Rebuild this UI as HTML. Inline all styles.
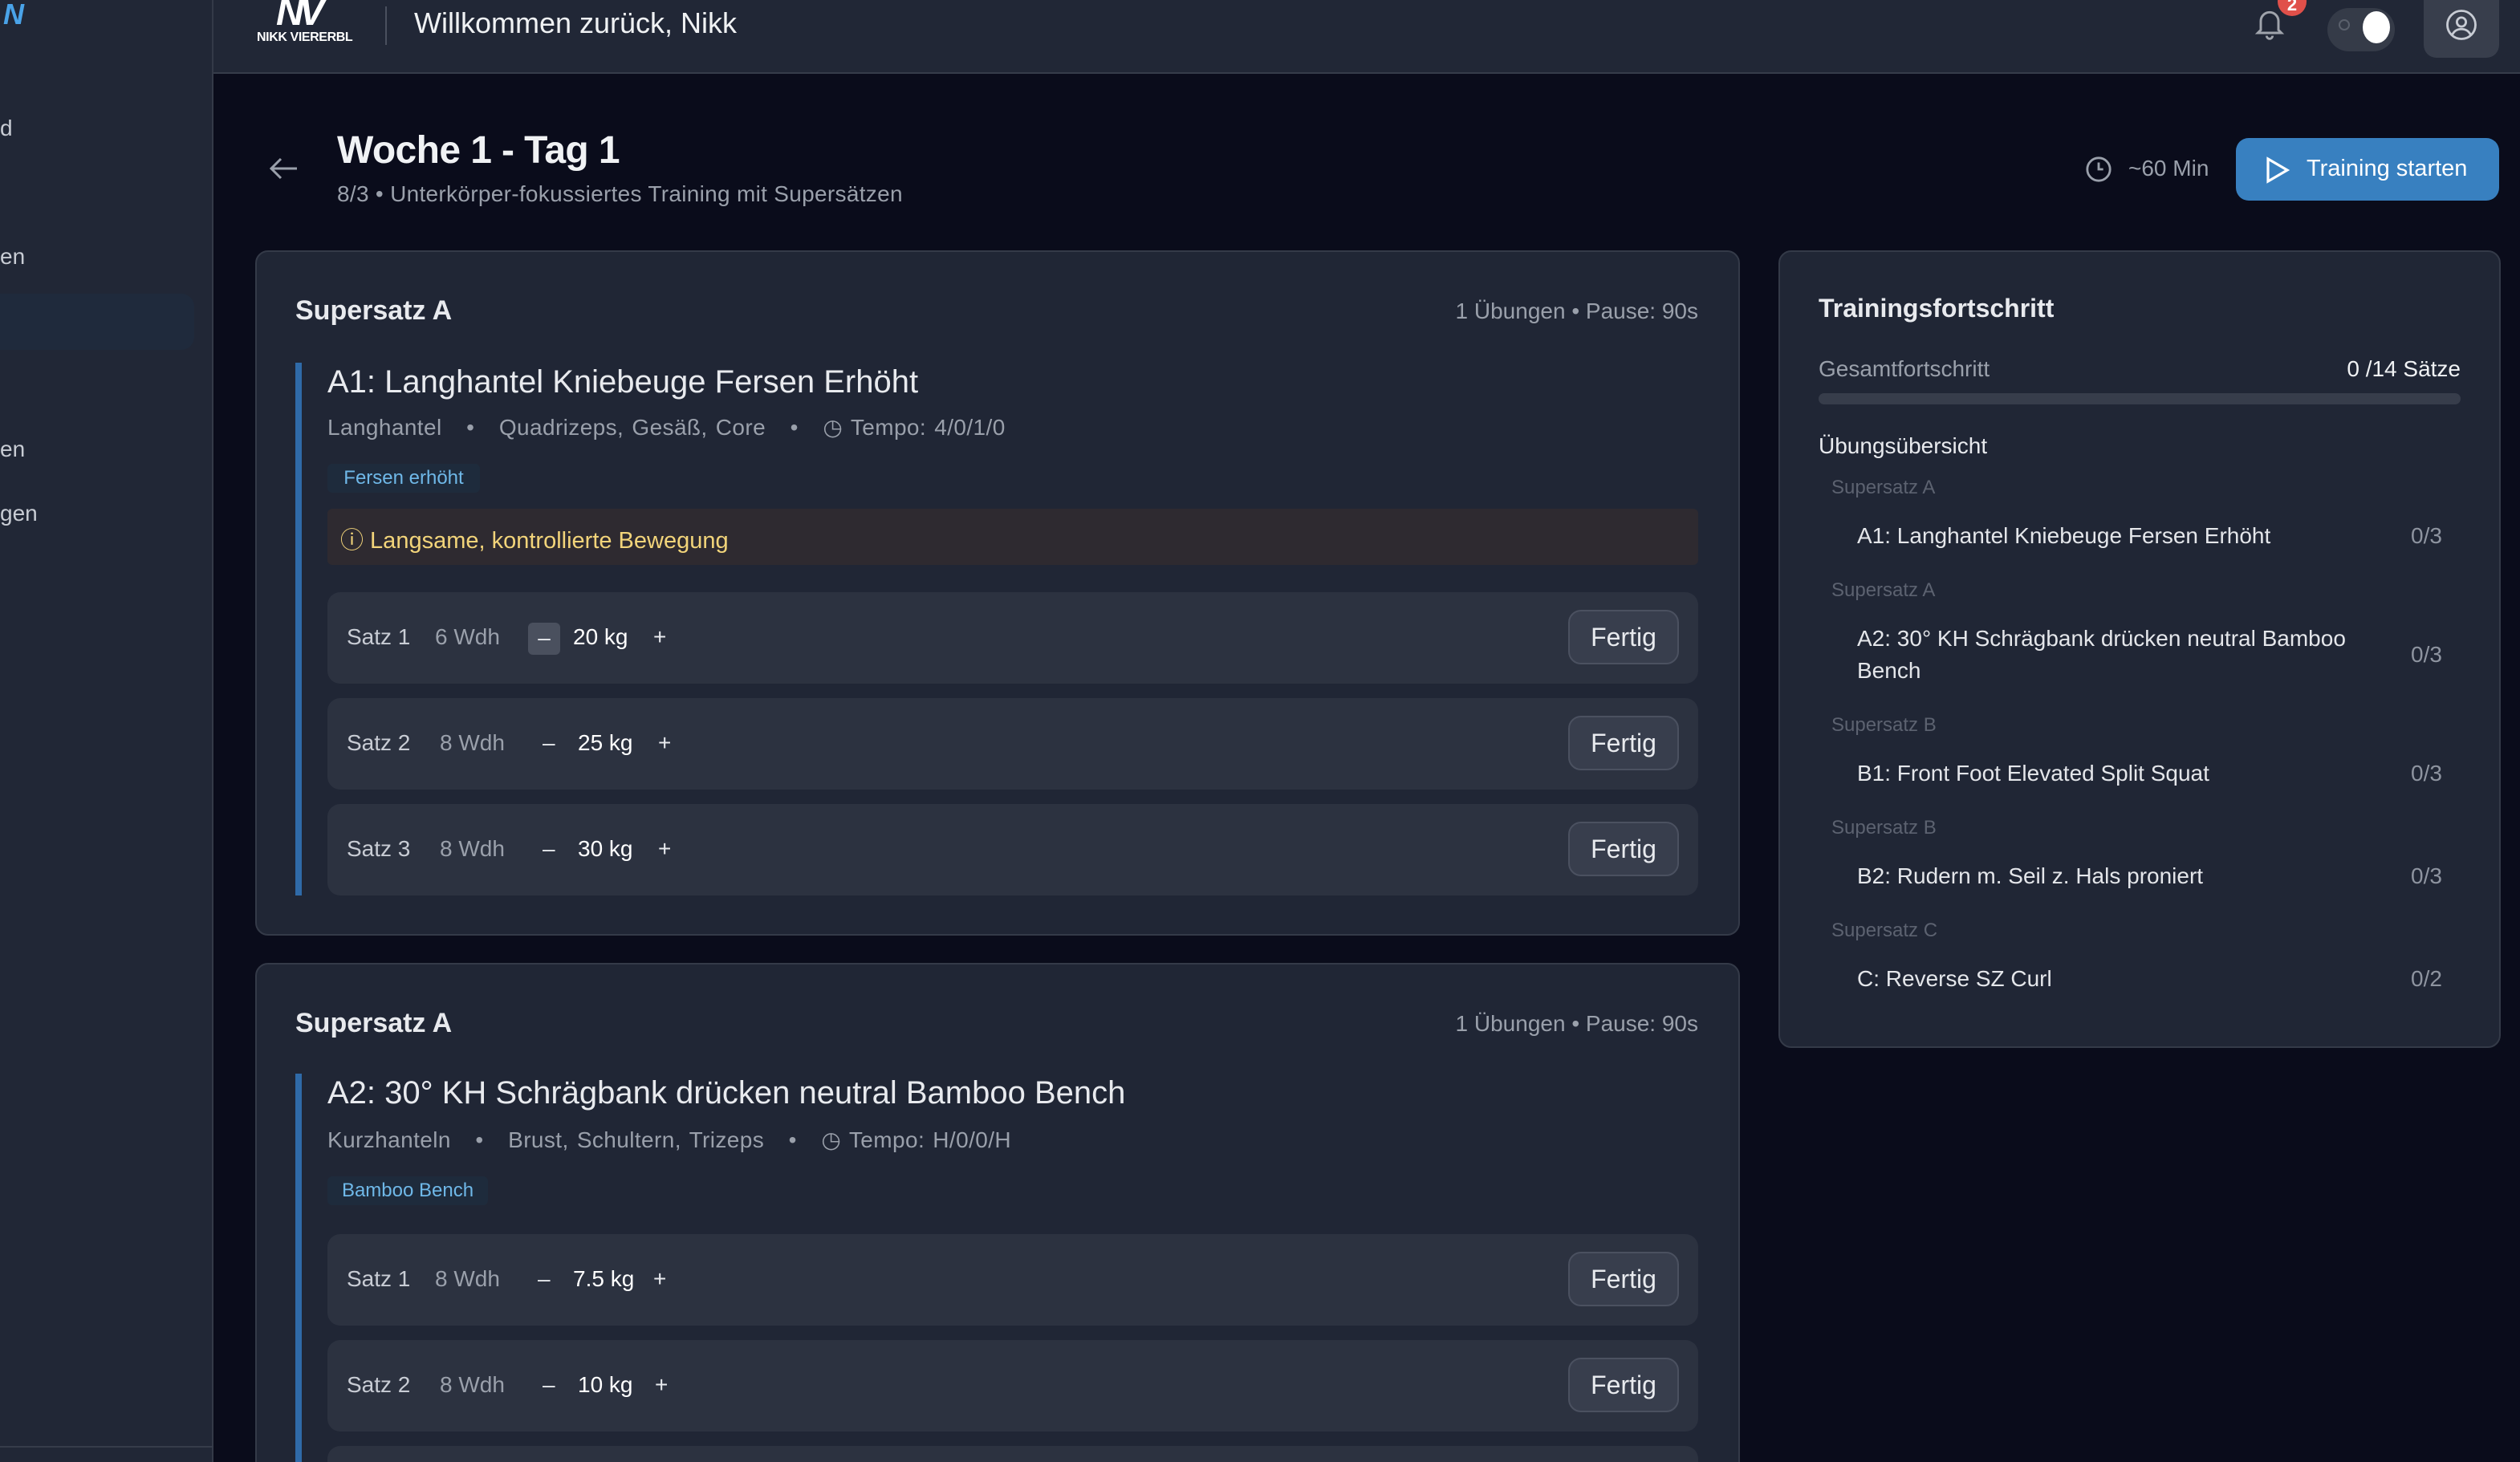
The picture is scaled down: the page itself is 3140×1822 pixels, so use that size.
<!DOCTYPE html>
<html><head><meta charset="utf-8"><style>
*{box-sizing:border-box;margin:0;padding:0}
html,body{width:3140px;height:1822px;overflow:hidden;background:#0a0c1b}
#r{zoom:2;width:1570px;height:911px;position:relative;font-family:"Liberation Sans",sans-serif;color:#e8eaee;background:#0a0c1b;overflow:hidden}
.a{position:absolute}
.sb{left:0;top:0;width:133px;height:911px;background:#212736;border-right:1px solid #343a48}
.hd{left:133px;top:0;width:1437px;height:46px;background:#212736;border-bottom:1px solid #363c4a}
.card{background:#202635;border:1px solid #343a48;border-radius:8px}
.row{position:absolute;left:203px;width:854px;height:57px;background:#2c3240;border-radius:8px;font-size:14px}
.row span{position:absolute;top:20px}
.fb{position:absolute;right:12px;top:11px;width:69px;height:34px;background:#383e4d;border:1px solid #4b5160;border-radius:8px;font-size:16px;color:#e8eaee;text-align:center;line-height:32px}
.g{color:#9aa0ab}
.lbl{position:absolute;left:1140px;font-size:12px;color:#5c6270}
.it{position:absolute;left:1156px;font-size:14px;color:#e4e6ea;width:330px;line-height:20px}
.ct{position:absolute;left:1502px;font-size:14px;color:#8e94a0}
</style></head><body><div id="r">
<div class="a sb"></div>
<div class="a" style="left:0;top:901px;width:133px;height:1px;background:#363c4a"></div>
<div class="a" style="left:2px;top:0;font-size:18px;font-weight:bold;color:#4aa3e8;font-style:italic;line-height:18px">N</div>
<div class="a" style="left:0;top:72px;font-size:14px;color:#c8ccd4">d</div>
<div class="a" style="left:0;top:152px;font-size:14px;color:#c8ccd4">en</div>
<div class="a" style="left:0;top:183px;width:121px;height:35px;background:#1f2a3c;border-radius:0 8px 8px 0"></div>
<div class="a" style="left:0;top:272px;font-size:14px;color:#c8ccd4">en</div>
<div class="a" style="left:0;top:312px;font-size:14px;color:#c8ccd4">gen</div>
<div class="a hd"></div>
<div class="a" style="left:172px;top:-6px;font-size:24px;font-weight:bold;font-style:italic;color:#fff;letter-spacing:-3px">NV</div>
<div class="a" style="left:160px;top:19px;font-size:8px;font-weight:bold;color:#fff;letter-spacing:-0.2px">NIKK VIERERBL</div>
<div class="a" style="left:240px;top:4px;width:1px;height:24px;background:#4a505e"></div>
<div class="a" style="left:258px;top:4px;font-size:18px;color:#f0f2f4">Willkommen zurück, Nikk</div>
<svg class="a" style="left:1403px;top:4px" width="22" height="22" viewBox="0 0 24 24" fill="none" stroke="#a0a4ac" stroke-width="1.6"><path d="M6 16V10a6 6 0 0 1 12 0v6l2 2H4z"/><path d="M10 20a2 2 0 0 0 4 0"/></svg>
<div class="a" style="left:1419px;top:-8px;width:18px;height:18px;border-radius:9px;background:#e0504a;color:#fff;font-size:11px;text-align:center;line-height:22px;font-weight:bold">2</div>
<div class="a" style="left:1450px;top:5px;width:42px;height:27px;border-radius:14px;background:#353b48"></div>
<div class="a" style="left:1472px;top:7px;width:17px;height:20px;border-radius:50%;background:#fff"></div>
<div class="a" style="left:1457px;top:12px;width:7px;height:7px;border-radius:50%;border:1px solid #5a606c"></div>
<div class="a" style="left:1510px;top:0;width:47px;height:36px;background:#383e4c;border-radius:0 0 8px 8px"></div>
<svg class="a" style="left:1523px;top:5px" width="21" height="21" viewBox="0 0 24 24" fill="none" stroke="#c8ccd4" stroke-width="1.6"><circle cx="12" cy="12" r="10"/><circle cx="12" cy="10" r="3.2"/><path d="M5.5 19c1.5-3 4-4 6.5-4s5 1 6.5 4"/></svg>

<svg class="a" style="left:167px;top:97px" width="20" height="16" viewBox="0 0 20 16" fill="none" stroke="#9aa0ab" stroke-width="1.5"><path d="M18 8H2M8 2L2 8l6 6"/></svg>
<div class="a" style="left:210px;top:80px;font-size:24px;font-weight:bold;color:#f0f2f4;letter-spacing:-0.3px">Woche 1 - Tag 1</div>
<div class="a g" style="left:210px;top:113px;font-size:14px;letter-spacing:0.15px">8/3 • Unterkörper-fokussiertes Training mit Supersätzen</div>
<svg class="a" style="left:1299px;top:97px" width="17" height="17" viewBox="0 0 24 24" fill="none" stroke="#9aa0ab" stroke-width="2"><circle cx="12" cy="12" r="10"/><path d="M12 6v6h4"/></svg>
<div class="a g" style="left:1326px;top:97px;font-size:14px">~60 Min</div>
<div class="a" style="left:1393px;top:86px;width:164px;height:39px;background:#3880c0;border-radius:8px"></div>
<svg class="a" style="left:1411px;top:97px" width="16" height="18" viewBox="0 0 16 18" fill="none" stroke="#fff" stroke-width="1.6"><path d="M2 2l12 7-12 7z"/></svg>
<div class="a" style="left:1437px;top:97px;font-size:14.5px;color:#fff">Training starten</div>

<!-- card 1 -->
<div class="a card" style="left:159px;top:156px;width:925px;height:427px"></div>
<div class="a" style="left:184px;top:184px;font-size:17px;font-weight:bold">Supersatz A</div>
<div class="a g" style="left:851px;top:186px;width:207px;text-align:right;font-size:14px">1 Übungen • Pause: 90s</div>
<div class="a" style="left:184px;top:226px;width:4px;height:332px;background:#2f6aa8"></div>
<div class="a" style="left:204px;top:227px;font-size:20px">A1: Langhantel Kniebeuge Fersen Erhöht</div>
<div class="a g" style="left:204px;top:258px;font-size:14px;word-spacing:1px;letter-spacing:0.2px">Langhantel &nbsp;&nbsp;•&nbsp;&nbsp; Quadrizeps, Gesäß, Core &nbsp;&nbsp;•&nbsp;&nbsp; ◷ Tempo: 4/0/1/0</div>
<div class="a" style="left:204px;top:289px;width:95px;height:18px;background:#1e2b3c;border-radius:3px;color:#6fb8e8;font-size:12px;line-height:18px;text-align:center">Fersen erhöht</div>
<div class="a" style="left:204px;top:317px;width:854px;height:35px;background:#2e2a30;border-radius:3px"></div>
<div class="a" style="left:212px;top:325px;font-size:14.5px;color:#f2d47a">ⓘ Langsame, kontrollierte Bewegung</div>
<div class="row" style="top:369px;left:204px"><span style="left:12px;color:#c8ccd4">Satz 1</span><span style="left:67px" class="g">6 Wdh</span><span style="left:125px;top:19px;width:20px;height:20px;background:#4a505e;border-radius:3px;text-align:center;line-height:19px">–</span><span style="left:153px;color:#fff">20 kg</span><span style="left:203px">+</span><div class="fb">Fertig</div></div>
<div class="row" style="top:435px;left:204px"><span style="left:12px;color:#c8ccd4">Satz 2</span><span style="left:70px" class="g">8 Wdh</span><span style="left:134px">–</span><span style="left:156px;color:#fff">25 kg</span><span style="left:206px">+</span><div class="fb">Fertig</div></div>
<div class="row" style="top:501px;left:204px"><span style="left:12px;color:#c8ccd4">Satz 3</span><span style="left:70px" class="g">8 Wdh</span><span style="left:134px">–</span><span style="left:156px;color:#fff">30 kg</span><span style="left:206px">+</span><div class="fb">Fertig</div></div>

<!-- card 2 -->
<div class="a card" style="left:159px;top:600px;width:925px;height:330px"></div>
<div class="a" style="left:184px;top:628px;font-size:17px;font-weight:bold">Supersatz A</div>
<div class="a g" style="left:851px;top:630px;width:207px;text-align:right;font-size:14px">1 Übungen • Pause: 90s</div>
<div class="a" style="left:184px;top:669px;width:4px;height:242px;background:#2f6aa8"></div>
<div class="a" style="left:204px;top:670px;font-size:20px">A2: 30° KH Schrägbank drücken neutral Bamboo Bench</div>
<div class="a g" style="left:204px;top:702px;font-size:14px;word-spacing:1px;letter-spacing:0.2px">Kurzhanteln &nbsp;&nbsp;•&nbsp;&nbsp; Brust, Schultern, Trizeps &nbsp;&nbsp;•&nbsp;&nbsp; ◷ Tempo: H/0/0/H</div>
<div class="a" style="left:204px;top:733px;width:100px;height:18px;background:#1e2b3c;border-radius:3px;color:#6fb8e8;font-size:12px;line-height:18px;text-align:center">Bamboo Bench</div>
<div class="row" style="top:769px;left:204px"><span style="left:12px;color:#c8ccd4">Satz 1</span><span style="left:67px" class="g">8 Wdh</span><span style="left:131px">–</span><span style="left:153px;color:#fff">7.5 kg</span><span style="left:203px">+</span><div class="fb">Fertig</div></div>
<div class="row" style="top:835px;left:204px"><span style="left:12px;color:#c8ccd4">Satz 2</span><span style="left:70px" class="g">8 Wdh</span><span style="left:134px">–</span><span style="left:156px;color:#fff">10 kg</span><span style="left:204px">+</span><div class="fb">Fertig</div></div>
<div class="row" style="top:901px;left:204px;height:10px;border-radius:8px 8px 0 0"></div>

<!-- right panel -->
<div class="a card" style="left:1108px;top:156px;width:450px;height:497px"></div>
<div class="a" style="left:1133px;top:183px;font-size:16px;font-weight:bold">Trainingsfortschritt</div>
<div class="a g" style="left:1133px;top:222px;font-size:14px">Gesamtfortschritt</div>
<div class="a" style="left:1401px;top:222px;width:132px;text-align:right;font-size:14px;color:#f0f2f4">0 /14 Sätze</div>
<div class="a" style="left:1133px;top:245px;width:400px;height:7px;border-radius:4px;background:#373d4b"></div>
<div class="a" style="left:1133px;top:270px;font-size:14px">Übungsübersicht</div>
<div class="lbl" style="top:297px;left:1141px">Supersatz A</div>
<div class="it" style="top:324px;left:1157px">A1: Langhantel Kniebeuge Fersen Erhöht</div><div class="ct" style="top:326px">0/3</div>
<div class="lbl" style="top:361px;left:1141px">Supersatz A</div>
<div class="it" style="top:388px;left:1157px">A2: 30° KH Schrägbank drücken neutral Bamboo Bench</div><div class="ct" style="top:400px">0/3</div>
<div class="lbl" style="top:445px;left:1141px">Supersatz B</div>
<div class="it" style="top:472px;left:1157px">B1: Front Foot Elevated Split Squat</div><div class="ct" style="top:474px">0/3</div>
<div class="lbl" style="top:509px;left:1141px">Supersatz B</div>
<div class="it" style="top:536px;left:1157px">B2: Rudern m. Seil z. Hals proniert</div><div class="ct" style="top:538px">0/3</div>
<div class="lbl" style="top:573px;left:1141px">Supersatz C</div>
<div class="it" style="top:600px;left:1157px">C: Reverse SZ Curl</div><div class="ct" style="top:602px">0/2</div>
</div></body></html>
